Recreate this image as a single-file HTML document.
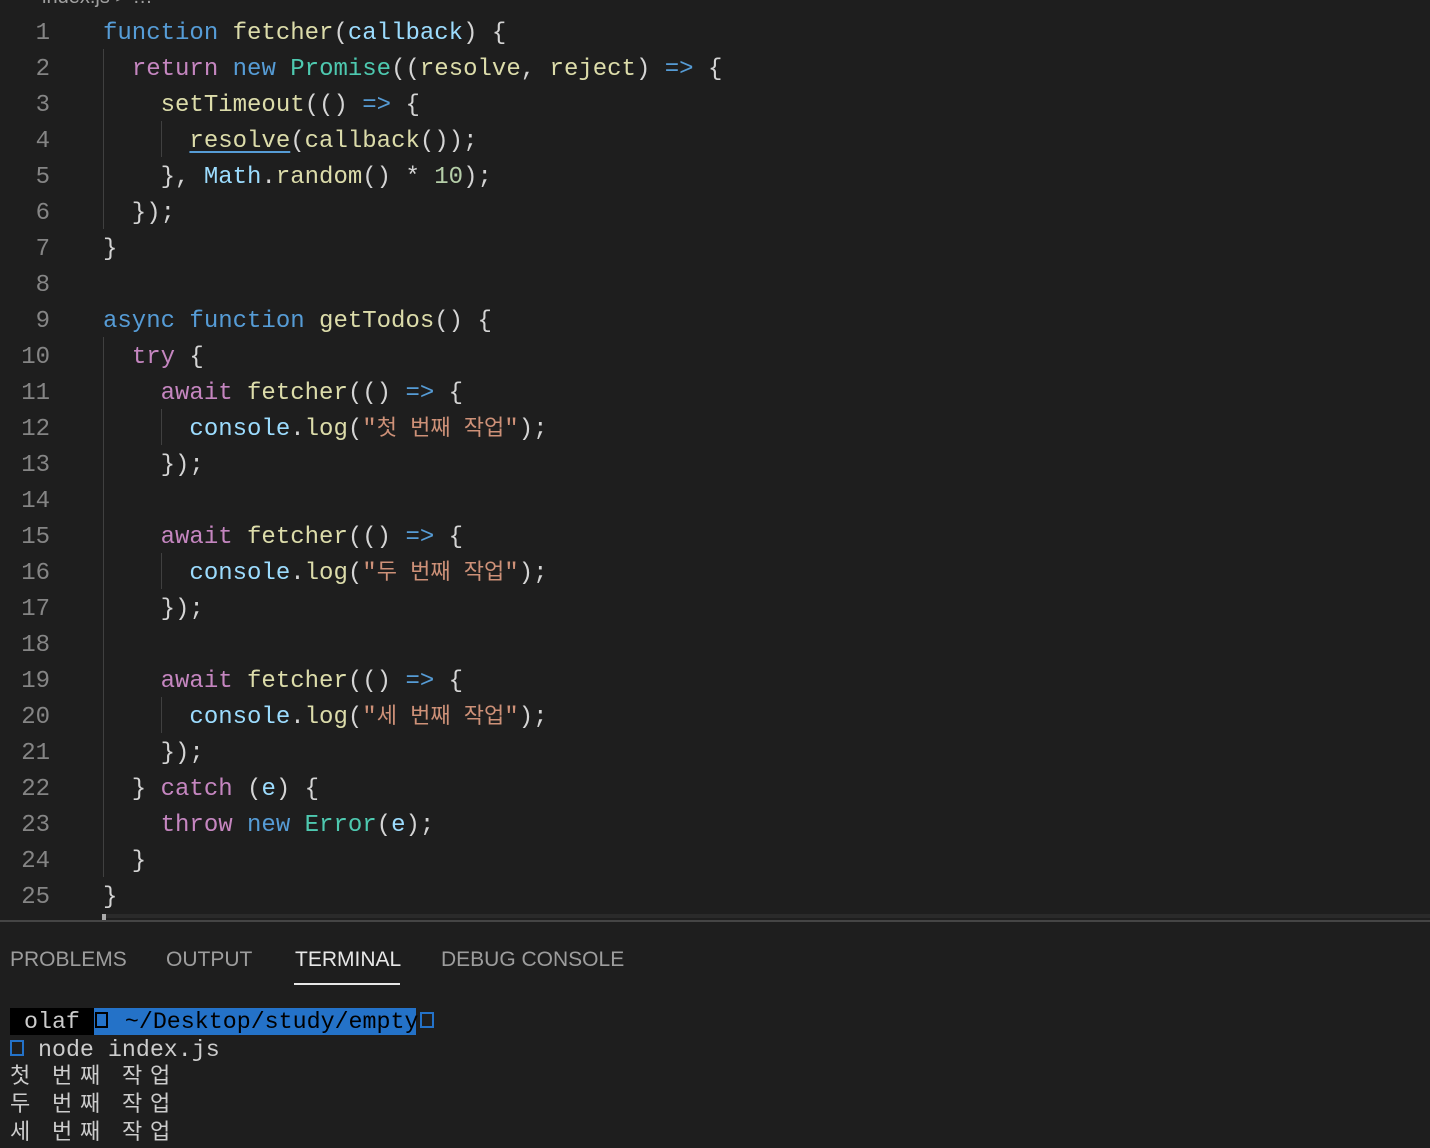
<!DOCTYPE html>
<html><head><meta charset="utf-8"><style>
body{margin:0;width:1430px;height:1148px;background:#1e1e1e;overflow:hidden;position:relative;font-family:"Liberation Mono","Noto Sans CJK KR",monospace}
.ln{position:absolute;left:0;width:50px;text-align:right;color:#858585;font-size:24px;line-height:36px;height:36px;margin-top:3px}
.cl{position:absolute;left:103px;font-size:24px;line-height:36px;height:36px;white-space:pre;color:#d4d4d4;margin-top:3px}
.g{position:absolute;width:1px;background:#404040}
.k{color:#569cd6}.f{color:#dcdcaa}.p{color:#9cdcfe}.c{color:#c586c0}.t{color:#4ec9b0}.s{color:#ce9178}.n{color:#b5cea8}
.ko{font-size:22px}
.tab{position:absolute;top:946px;font-family:"Liberation Sans",sans-serif;font-size:21px;color:#9d9d9d;line-height:28px}
.tr{position:absolute;left:10px;font-size:23.3px;line-height:28px;height:28px;color:#cccccc;white-space:pre;margin-top:2px}
.kr{display:inline-block;width:28px}
.sq{display:inline-block;width:10px;height:12px;border:2px solid #2472c8;vertical-align:middle;margin-top:-3px}
</style></head><body>
<div style="position:absolute;left:42px;top:-14px;color:#a0a0a0;font-family:'Liberation Sans',sans-serif;font-size:20px">index.js &gt; …</div>

<div class="g" style="left:103px;top:49px;height:180px"></div>
<div class="g" style="left:161px;top:121px;height:36px"></div>
<div class="g" style="left:103px;top:337px;height:540px"></div>
<div class="g" style="left:161px;top:409px;height:36px"></div>
<div class="g" style="left:161px;top:553px;height:36px"></div>
<div class="g" style="left:161px;top:697px;height:36px"></div>

<div class="ln" style="top:13px">1</div><div class="cl" style="top:13px"><span class="k">function</span> <span class="f">fetcher</span>(<span class="p">callback</span>) {</div>
<div class="ln" style="top:49px">2</div><div class="cl" style="top:49px">  <span class="c">return</span> <span class="k">new</span> <span class="t">Promise</span>((<span class="f">resolve</span>, <span class="f">reject</span>) <span class="k">=&gt;</span> {</div>
<div class="ln" style="top:85px">3</div><div class="cl" style="top:85px">    <span class="f">setTimeout</span>(() <span class="k">=&gt;</span> {</div>
<div class="ln" style="top:121px">4</div><div class="cl" style="top:121px">      <span class="f" style="text-decoration:underline;text-decoration-color:#569cd6;text-underline-offset:4px">resolve</span>(<span class="f">callback</span>());</div>
<div class="ln" style="top:157px">5</div><div class="cl" style="top:157px">    }, <span class="p">Math</span>.<span class="f">random</span>() * <span class="n">10</span>);</div>
<div class="ln" style="top:193px">6</div><div class="cl" style="top:193px">  });</div>
<div class="ln" style="top:229px">7</div><div class="cl" style="top:229px">}</div>
<div class="ln" style="top:265px">8</div>
<div class="ln" style="top:301px">9</div><div class="cl" style="top:301px"><span class="k">async</span> <span class="k">function</span> <span class="f">getTodos</span>() {</div>
<div class="ln" style="top:337px">10</div><div class="cl" style="top:337px">  <span class="c">try</span> {</div>
<div class="ln" style="top:373px">11</div><div class="cl" style="top:373px">    <span class="c">await</span> <span class="f">fetcher</span>(() <span class="k">=&gt;</span> {</div>
<div class="ln" style="top:409px">12</div><div class="cl" style="top:409px">      <span class="p">console</span>.<span class="f">log</span>(<span class="s">"<span class="ko">첫 번째 작업</span>"</span>);</div>
<div class="ln" style="top:445px">13</div><div class="cl" style="top:445px">    });</div>
<div class="ln" style="top:481px">14</div>
<div class="ln" style="top:517px">15</div><div class="cl" style="top:517px">    <span class="c">await</span> <span class="f">fetcher</span>(() <span class="k">=&gt;</span> {</div>
<div class="ln" style="top:553px">16</div><div class="cl" style="top:553px">      <span class="p">console</span>.<span class="f">log</span>(<span class="s">"<span class="ko">두 번째 작업</span>"</span>);</div>
<div class="ln" style="top:589px">17</div><div class="cl" style="top:589px">    });</div>
<div class="ln" style="top:625px">18</div>
<div class="ln" style="top:661px">19</div><div class="cl" style="top:661px">    <span class="c">await</span> <span class="f">fetcher</span>(() <span class="k">=&gt;</span> {</div>
<div class="ln" style="top:697px">20</div><div class="cl" style="top:697px">      <span class="p">console</span>.<span class="f">log</span>(<span class="s">"<span class="ko">세 번째 작업</span>"</span>);</div>
<div class="ln" style="top:733px">21</div><div class="cl" style="top:733px">    });</div>
<div class="ln" style="top:769px">22</div><div class="cl" style="top:769px">  } <span class="c">catch</span> (<span class="p">e</span>) {</div>
<div class="ln" style="top:805px">23</div><div class="cl" style="top:805px">    <span class="c">throw</span> <span class="k">new</span> <span class="t">Error</span>(<span class="p">e</span>);</div>
<div class="ln" style="top:841px">24</div><div class="cl" style="top:841px">  }</div>
<div class="ln" style="top:877px">25</div><div class="cl" style="top:877px">}</div>

<div style="position:absolute;left:103px;top:914px;width:1327px;height:4px;background:#2a2a2a"></div>
<div style="position:absolute;left:102px;top:914px;width:4px;height:6px;background:#aaa"></div>
<div style="position:absolute;left:0;top:920px;width:1430px;height:2px;background:#454545"></div>

<div class="tab" style="left:10px">PROBLEMS</div>
<div class="tab" style="left:166px">OUTPUT</div>
<div class="tab" style="left:295px;color:#e7e7e7">TERMINAL</div>
<div style="position:absolute;left:294px;top:983px;width:106px;height:2px;background:#e7e7e7"></div>
<div class="tab" style="left:441px">DEBUG CONSOLE</div>

<div style="position:absolute;left:10px;top:1008px;width:84px;height:27px;background:#000"></div>
<div style="position:absolute;left:94px;top:1008px;width:322px;height:27px;background:#2472c8"></div>
<div class="tr" style="top:1006px"> olaf <span style="color:#000"><span class="sq" style="border-color:#000;width:9px;margin-left:1px;margin-right:3px"></span> ~/Desktop/study/empty</span><span class="sq" style="margin-left:2px"></span></div>
<div class="tr" style="top:1034px"><span class="sq"></span> node index.js</div>
<div class="tr" style="top:1062px;font-size:22px"><span class="kr">첫</span><span class="kr" style="width:14px"></span><span class="kr">번</span><span class="kr">째</span><span class="kr" style="width:14px"></span><span class="kr">작</span><span class="kr">업</span></div>
<div class="tr" style="top:1090px;font-size:22px"><span class="kr">두</span><span class="kr" style="width:14px"></span><span class="kr">번</span><span class="kr">째</span><span class="kr" style="width:14px"></span><span class="kr">작</span><span class="kr">업</span></div>
<div class="tr" style="top:1118px;font-size:22px"><span class="kr">세</span><span class="kr" style="width:14px"></span><span class="kr">번</span><span class="kr">째</span><span class="kr" style="width:14px"></span><span class="kr">작</span><span class="kr">업</span></div>
</body></html>
